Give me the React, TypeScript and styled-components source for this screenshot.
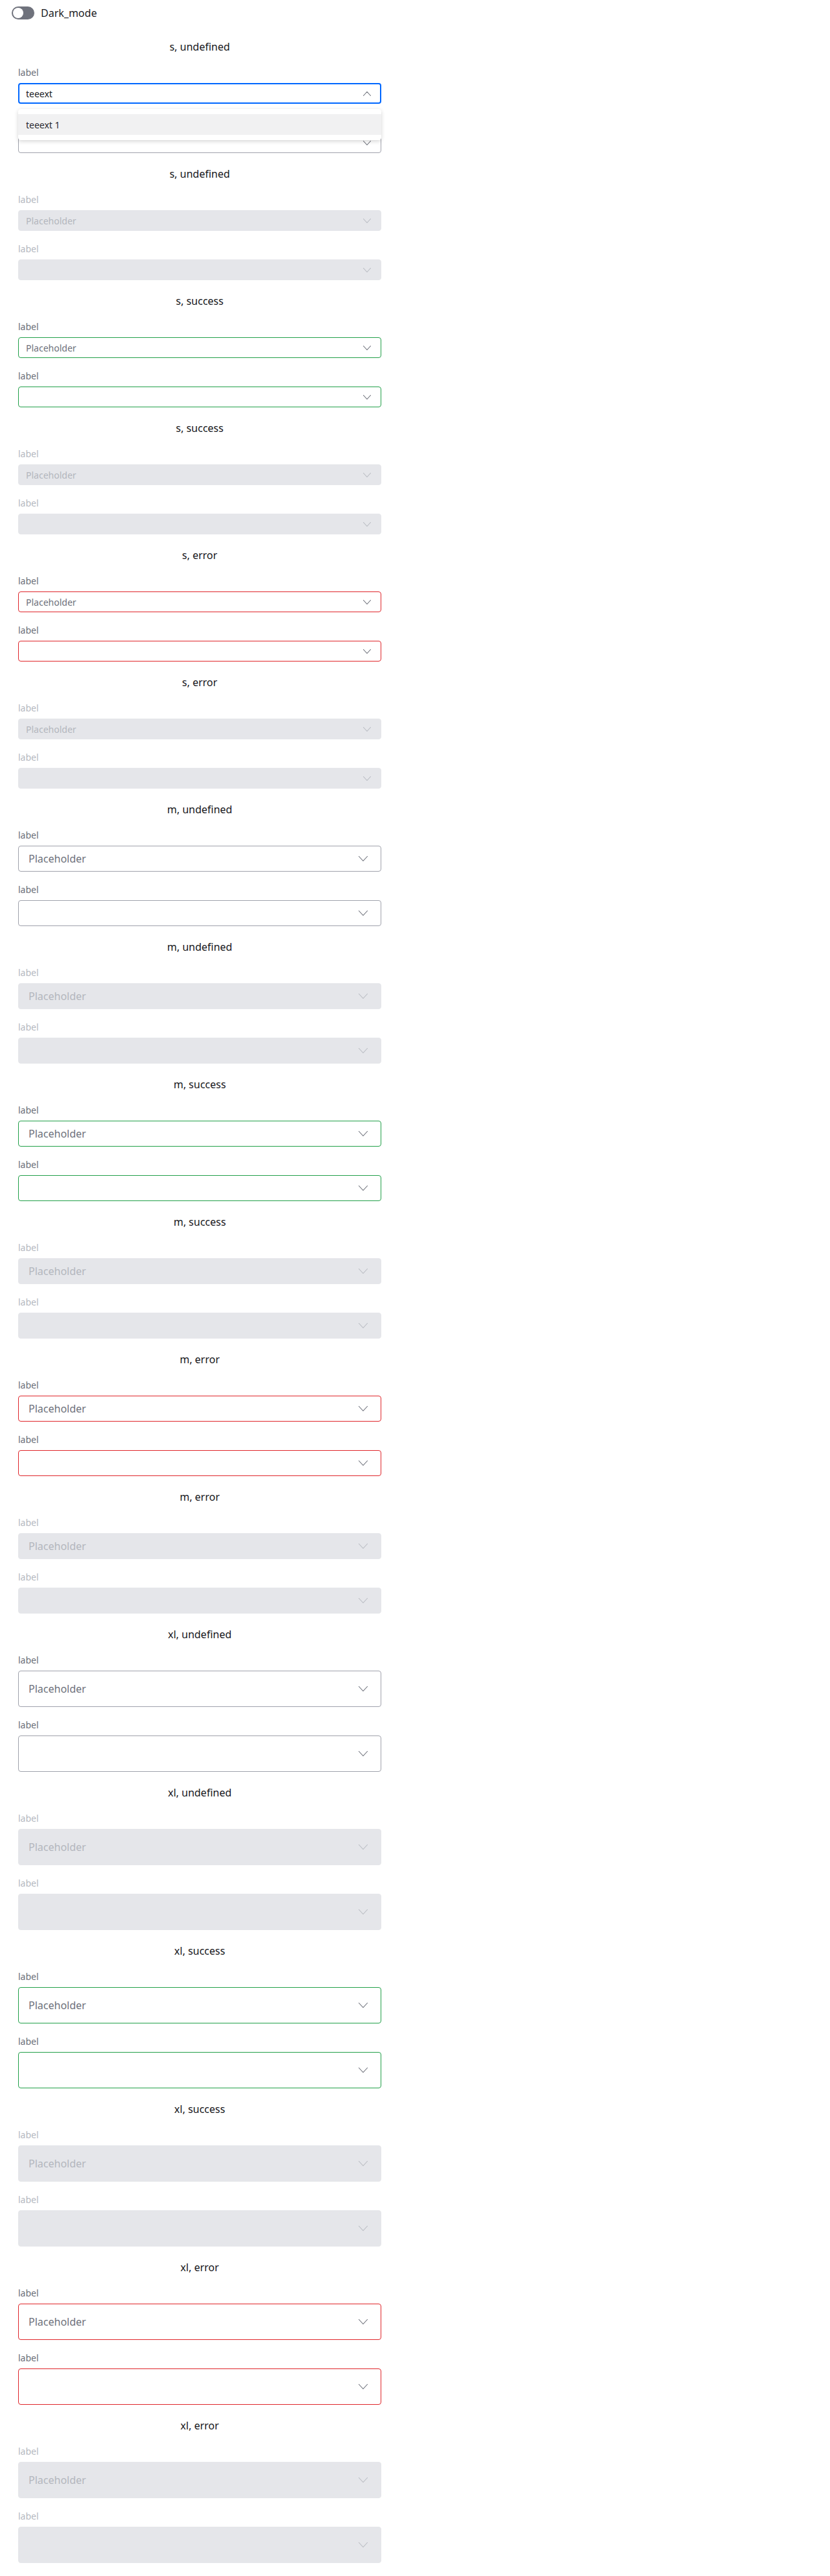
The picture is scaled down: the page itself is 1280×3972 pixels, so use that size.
import React from "react";
import styled, { createGlobalStyle, css } from "styled-components";

type Size = "s" | "m" | "xl";
type Status = "undefined" | "success" | "error";

const GlobalStyle = createGlobalStyle`
  html, body {
    margin: 0;
    padding: 0;
    background: #ffffff;
  }
  body {
    font-family: "Noto Sans", "Open Sans", sans-serif;
    color: #1b1b1f;
  }
  * { box-sizing: border-box; }
`;

const Page = styled.div`
  display: flex;
  flex-direction: column;
  padding-bottom: 20px;
`;

const Header = styled.header`
  display: flex;
  align-items: center;
  gap: 10px;
  height: 40px;
  padding: 0 18px 0 18px;
  margin-top: 0;
`;

const ToggleTrack = styled.span<{ $on: boolean }>`
  position: relative;
  display: inline-block;
  width: 35px;
  height: 20px;
  border-radius: 10px;
  background: ${(p) => (p.$on ? "#0067ff" : "#6f727c")};
`;

const ToggleKnob = styled.span<{ $on: boolean }>`
  position: absolute;
  top: 2px;
  left: ${(p) => (p.$on ? "17px" : "2px")};
  width: 16px;
  height: 16px;
  border-radius: 50%;
  background: #ffffff;
`;

const ToggleLabel = styled.span`
  font-size: 16px;
  line-height: 20px;
  color: #1b1b1f;
`;

const Main = styled.main`
  display: flex;
  flex-direction: column;
  gap: 20px;
  width: 560px;
  margin: 20px 0 0 28px;
`;

const Section = styled.section`
  display: flex;
  flex-direction: column;
  gap: 20px;
`;

const Title = styled.h2`
  margin: 0;
  font-size: 16px;
  line-height: 24px;
  font-weight: 400;
  text-align: center;
  color: #16161a;
`;

const Field = styled.div`
  position: relative;
  display: flex;
  flex-direction: column;
  gap: 8px;
`;

const Label = styled.label<{ $disabled: boolean }>`
  font-size: 14px;
  line-height: 16px;
  color: ${(p) => (p.$disabled ? "#b5b8bf" : "#6b6e78")};
`;

const heights: Record<Size, number> = { s: 32, m: 40, xl: 56 };
const padLeft: Record<Size, number> = { s: 11, m: 15, xl: 15 };
const padRight: Record<Size, number> = { s: 15, m: 20, xl: 20 };
const fontSizes: Record<Size, number> = { s: 14, m: 16, xl: 16 };

const statusBorder: Record<Status, string> = {
  undefined: "#a0a2ac",
  success: "#22a049",
  error: "#e0262b",
};

const Trigger = styled.div<{
  $size: Size;
  $status: Status;
  $disabled: boolean;
  $open: boolean;
}>`
  display: flex;
  align-items: center;
  justify-content: space-between;
  height: ${(p) => heights[p.$size]}px;
  padding: 0 ${(p) => padRight[p.$size]}px 0 ${(p) => padLeft[p.$size]}px;
  border: 1px solid ${(p) => statusBorder[p.$status]};
  border-radius: 4px;
  background: #ffffff;
  font-size: ${(p) => fontSizes[p.$size]}px;
  cursor: pointer;
  ${(p) =>
    p.$disabled &&
    css`
      background: #e5e6ea;
      border-color: #e5e6ea;
      cursor: default;
    `}
  ${(p) =>
    p.$open &&
    css`
      border: 2px solid #0067ff;
      padding-left: ${padLeft[p.$size] - 1}px;
      padding-right: ${padRight[p.$size] - 1}px;
    `}
`;

const Value = styled.span<{ $placeholder: boolean; $disabled: boolean }>`
  color: ${(p) =>
    p.$disabled ? "#b3b6bd" : p.$placeholder ? "#6e717b" : "#1b1b1f"};
  white-space: nowrap;
`;

const Menu = styled.ul`
  position: absolute;
  z-index: 10;
  top: calc(100% + 8px);
  left: 0;
  right: 0;
  margin: 0;
  padding: 8px 0;
  list-style: none;
  background: #ffffff;
  border-radius: 4px;
  box-shadow: 0 2px 6px rgba(0, 0, 0, 0.16), 0 0 1px rgba(0, 0, 0, 0.08);
`;

const Option = styled.li<{ $active: boolean }>`
  display: flex;
  align-items: center;
  height: 32px;
  padding: 0 12px;
  font-size: 14px;
  color: #2a2a30;
  background: ${(p) => (p.$active ? "#f1f1f2" : "transparent")};
`;

const chevronSize: Record<Size, { w: number; h: number }> = {
  s: { w: 12, h: 7 },
  m: { w: 14, h: 8 },
  xl: { w: 14, h: 8 },
};

function Chevron({ size, up, disabled }: { size: Size; up: boolean; disabled: boolean }) {
  const { w, h } = chevronSize[size];
  const color = disabled ? "#b9bcc3" : "#6b6e78";
  const d = up
    ? `M0.5 ${h - 0.5} L${w / 2} 0.5 L${w - 0.5} ${h - 0.5}`
    : `M0.5 0.5 L${w / 2} ${h - 0.5} L${w - 0.5} 0.5`;
  return (
    <svg width={w} height={h} viewBox={`0 0 ${w} ${h}`} fill="none" aria-hidden>
      <path d={d} stroke={color} strokeWidth={1.1} strokeLinecap="round" strokeLinejoin="round" />
    </svg>
  );
}

type SelectProps = {
  size: Size;
  status: Status;
  disabled: boolean;
  placeholder?: string;
  value?: string;
  open?: boolean;
  options?: string[];
};

function Select({ size, status, disabled, placeholder, value, open = false, options = [] }: SelectProps) {
  const shown = value ?? placeholder ?? "";
  return (
    <Field>
      <Label $disabled={disabled}>label</Label>
      <Trigger $size={size} $status={status} $disabled={disabled} $open={open}>
        <Value $placeholder={!value} $disabled={disabled}>
          {shown}
        </Value>
        <Chevron size={size} up={open} disabled={disabled} />
      </Trigger>
      {open && (
        <Menu>
          {options.map((o, i) => (
            <Option key={o} $active={i === 0}>
              {o}
            </Option>
          ))}
        </Menu>
      )}
    </Field>
  );
}

const sizes: Size[] = ["s", "m", "xl"];
const statuses: Status[] = ["undefined", "success", "error"];

export default function App() {
  const sections: { size: Size; status: Status; disabled: boolean }[] = [];
  sizes.forEach((size) =>
    statuses.forEach((status) => {
      sections.push({ size, status, disabled: false });
      sections.push({ size, status, disabled: true });
    })
  );

  return (
    <>
      <GlobalStyle />
      <Page>
        <Header>
          <ToggleTrack $on={false}>
            <ToggleKnob $on={false} />
          </ToggleTrack>
          <ToggleLabel>Dark_mode</ToggleLabel>
        </Header>
        <Main>
          {sections.map((s, idx) => {
            const first = idx === 0;
            return (
              <Section key={idx}>
                <Title>
                  {s.size}, {s.status}
                </Title>
                <Select
                  size={s.size}
                  status={s.status}
                  disabled={s.disabled}
                  placeholder="Placeholder"
                  value={first ? "teeext" : undefined}
                  open={first}
                  options={["teeext 1"]}
                />
                <Select size={s.size} status={s.status} disabled={s.disabled} />
              </Section>
            );
          })}
        </Main>
      </Page>
    </>
  );
}
